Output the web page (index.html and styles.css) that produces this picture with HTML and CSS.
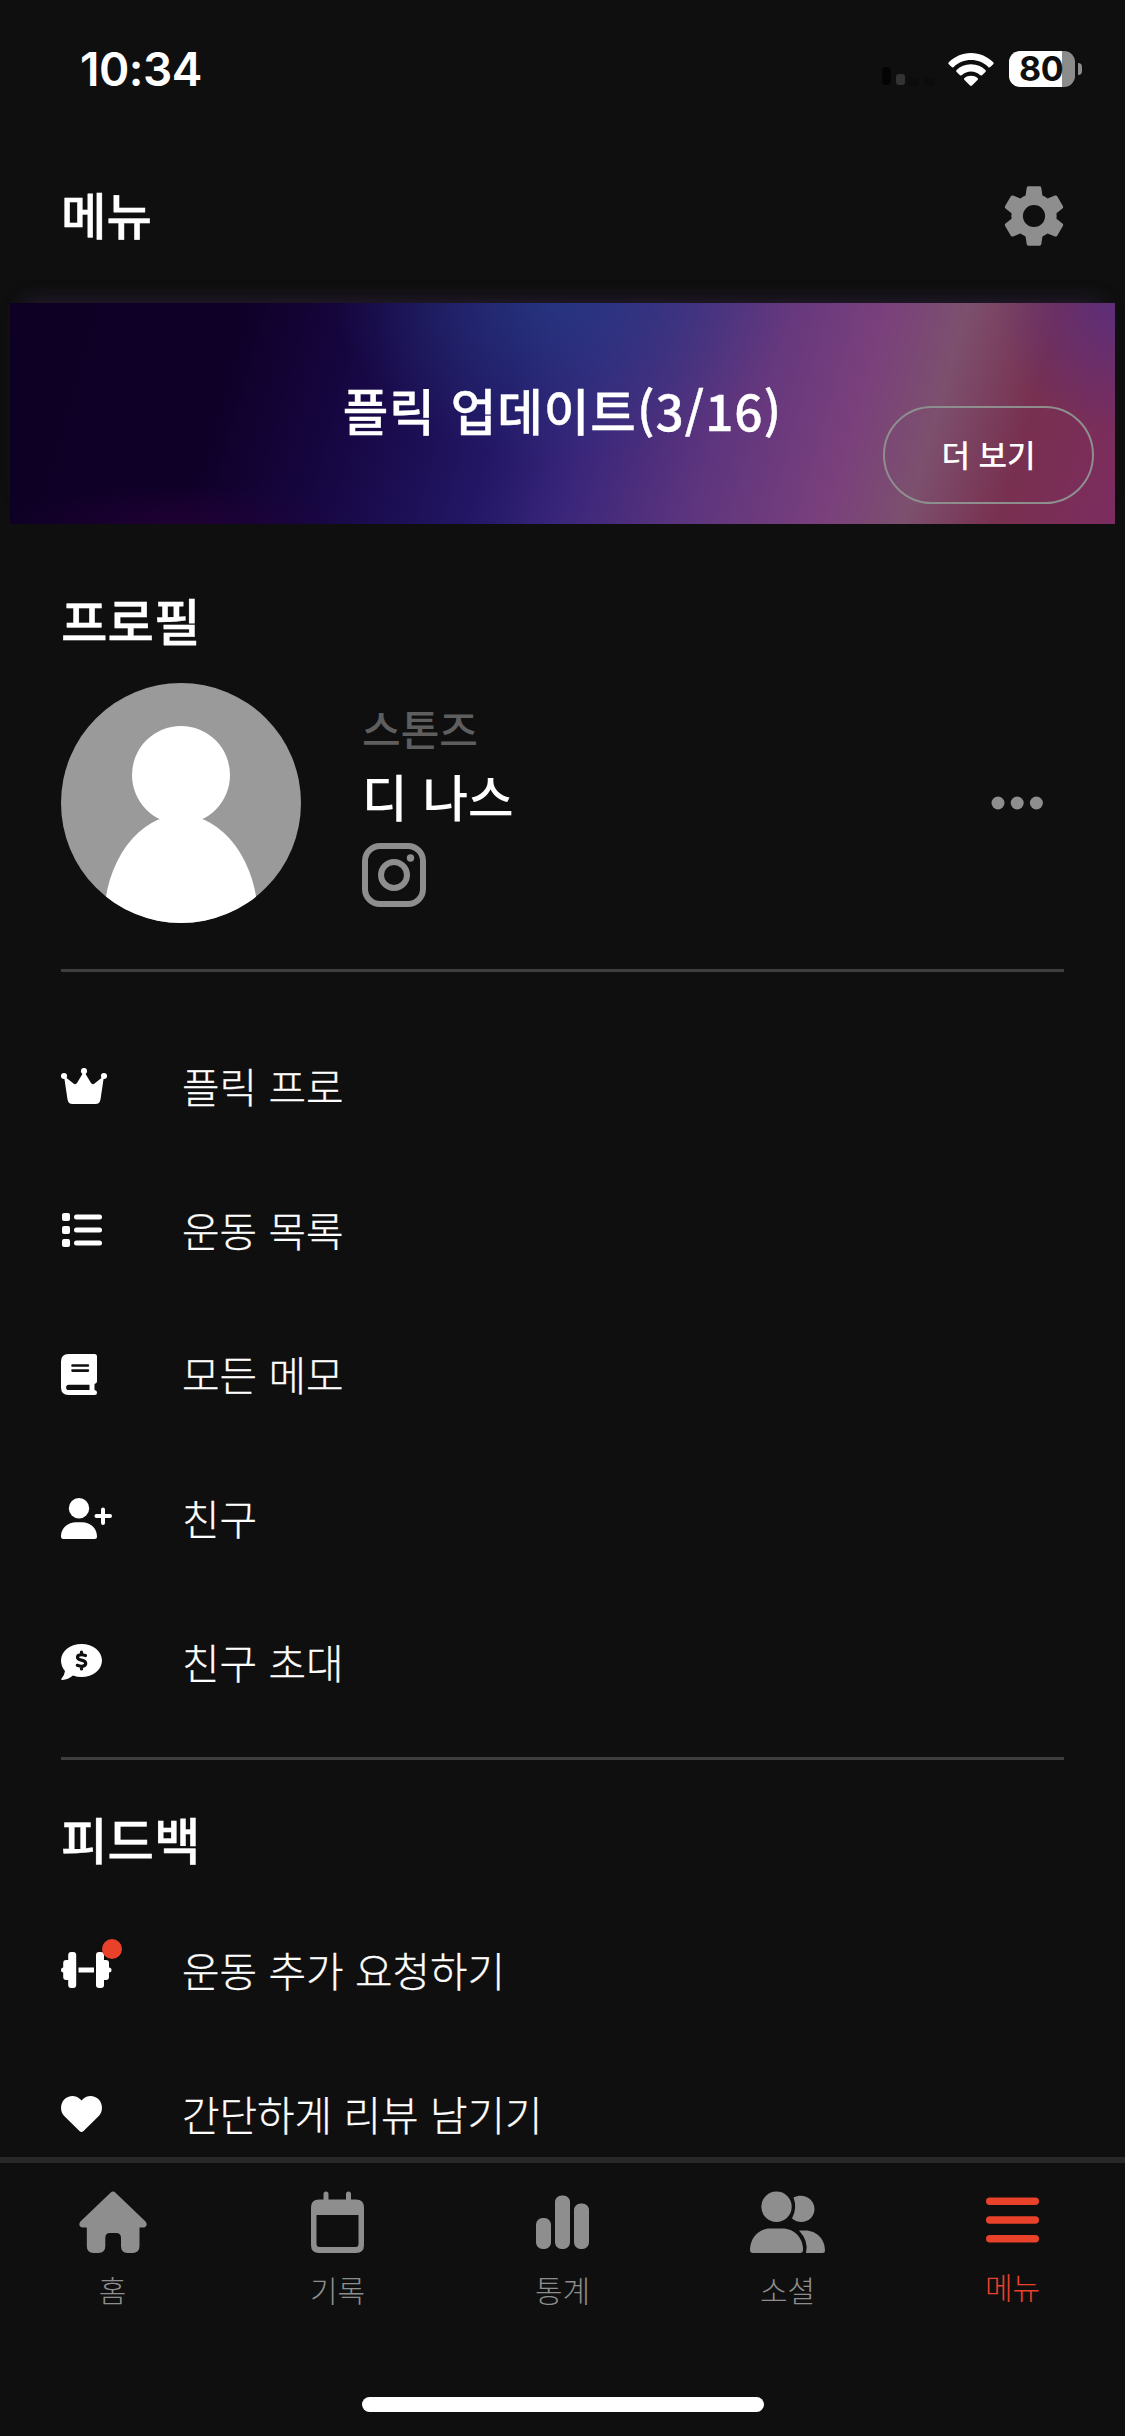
FILE: index.html
```html
<!DOCTYPE html>
<html lang="ko">
<head>
<meta charset="utf-8">
<title>메뉴</title>
<link rel="stylesheet" href="styles.css">
</head>
<body>
<div class="screen">
  <div class="status">
    <div class="clock">10:34</div>
    <div class="status-icons">
      <svg class="signal" width="54" height="36" viewBox="0 0 54 36"><rect x="0" y="16" width="9" height="18" rx="4" fill="#040404"/><rect x="14" y="23" width="9" height="11" rx="3" fill="#333"/><rect x="26" y="26" width="11" height="9" rx="4" fill="#0c0c0c"/><rect x="42" y="26" width="11" height="9" rx="4" fill="#0c0c0c"/></svg>
      <svg class="wifi" width="46" height="33" viewBox="0 0 46 33" fill="#fff"><path d="M23 0C32 0 39.500 3.700 45.200 9.300Q46.200 10.300 45.200 11.300L42.300 14Q41.300 14.900 40.300 13.900C35.600 9.400 29.700 7 23 7S10.400 9.400 5.700 13.900Q4.700 14.900 3.700 14L.8 11.300Q-.2 10.300.8 9.300C6.500 3.700 14 0 23 0Z"/><path d="M23 11.300C28.800 11.300 33.700 13.500 37.400 17Q38.400 18 37.400 19L34 22.200Q33 23 32 22.100C29.500 19.900 26.500 18.500 23 18.500S16.500 19.900 14 22.100Q13 23 12 22.200L8.600 19Q7.600 18 8.600 17C12.300 13.500 17.200 11.300 23 11.300Z"/><path d="M23 22.700C25.600 22.700 27.800 23.500 29.500 25Q30.500 26 29.500 27L24 32.500Q23 33.400 22 32.500L16.500 27Q15.500 26 16.500 25C18.200 23.500 20.400 22.700 23 22.700Z"/></svg>
      <div class="battery"><span>80</span></div>
      <div class="battery-tip"></div>
    </div>
  </div>

  <header class="header">
    <h1>메뉴</h1>
    <svg width="70" height="72" viewBox="0 0 24 24" fill="#8e8e8e"><path fill-rule="evenodd" d="M10.100 1.800h3.800q.5 0 .6.500l.4 2.700q.95.400 1.750 1l2.500-1q.5-.2.800.250l1.950 3.350q.25.500-.15.800l-2.050 1.650q.1.950 0 1.900l2.050 1.650q.4.300.15.800l-1.950 3.350q-.3.450-.8.250l-2.500-1q-.8.600-1.750 1l-.4 2.700q-.1.500-.6.500h-3.800q-.5 0-.6-.5l-.4-2.700q-.95-.4-1.750-1l-2.500 1q-.5.200-.8-.25L2.100 15.400q-.25-.5.150-.8l2.050-1.650q-.1-.95 0-1.900L2.250 9.400q-.4-.3-.15-.8l1.950-3.350q.3-.450.8-.25l2.500 1q.8-.6 1.750-1l.4-2.700q.1-.5.600-.5ZM12 8.200a3.800 3.800 0 1 0 0 7.600a3.800 3.800 0 0 0 0-7.600Z"/></svg>
  </header>

  <section class="banner">
    <div class="banner-title">플릭 업데이트(3/16)</div>
    <button class="more">더 보기</button>
  </section>

  <main class="content">
    <h2 class="profile-heading">프로필</h2>
    <div class="profile">
      <svg class="avatar" width="240" height="240" viewBox="0 0 240 240"><defs><clipPath id="round"><circle cx="120" cy="120" r="120"/></clipPath></defs><g clip-path="url(#round)"><path d="M0 0h240v240H0Z" fill="#9a9a9a"/><circle cx="120" cy="92" r="49" fill="#fff"/><ellipse cx="120" cy="237" rx="77" ry="105" fill="#fff"/></g></svg>
      <div class="identity">
        <div class="team">스톤즈</div>
        <div class="name">디 나스</div>
        <svg class="insta" width="64" height="64" viewBox="0 0 64 64" fill="none" stroke="#8e8e8e" stroke-width="6"><rect x="3" y="3" width="58" height="58" rx="15"/><circle cx="32" cy="32" r="13"/><circle cx="48.500" cy="15" r="3.700" fill="#8e8e8e" stroke="none"/></svg>
      </div>
      <svg class="dots" width="54" height="14" viewBox="0 0 54 14" fill="#8e8e8e"><circle cx="7" cy="7" r="6.500"/><circle cx="26.200" cy="7" r="6.500"/><circle cx="45.400" cy="7" r="6.500"/></svg>
    </div>
    <hr>
    <ul class="menu">
      <li><svg width="46" height="36" viewBox="0 0 46 36" fill="#fff"><circle cx="3" cy="8" r="3.100"/><circle cx="23" cy="3" r="3.100"/><circle cx="43" cy="8" r="3.100"/><path d="M3 8L12.500 15.500Q14.500 17 16 15L22 5H24L30 15Q31.500 17 33.500 15.500L43 8L39.500 31.500Q38.700 36 34.500 36H11.500Q7.300 36 6.500 31.500Z"/></svg><span>플릭 프로</span></li>
      <li><svg width="41" height="34" viewBox="0 0 41 34" fill="#fff"><rect x="1" y="0" width="8" height="8" rx="2"/><rect x="1" y="13" width="8" height="8" rx="2"/><rect x="1" y="26" width="8" height="8" rx="2"/><rect x="13" y="1.500" width="28" height="5" rx="2.500"/><rect x="13" y="14.500" width="28" height="5" rx="2.500"/><rect x="13" y="27.500" width="28" height="5" rx="2.500"/></svg><span>운동 목록</span></li>
      <li><svg width="36" height="41" viewBox="0 0 36 41" fill="#fff"><path fill-rule="evenodd" d="M7.500 0H33.500Q36 0 36 2.500V27.500Q36 29.300 33.500 30V36Q36 36.300 36 38.500Q36 41 33.500 41H7.500Q0 41 0 33.500V7.500Q0 0 7.500 0ZM11.500 10.200Q10.200 10.200 10.200 11.500T11.500 12.800H27Q28.200 12.800 28.200 11.500T27 10.200ZM11.500 15.300Q10.200 15.300 10.200 16.600T11.500 17.900H27Q28.200 17.900 28.200 16.600T27 15.300ZM7.700 30.800Q5.100 30.800 5.100 33.400T7.700 36H28.500V30.800Z"/></svg><span>모든 메모</span></li>
      <li><svg width="51" height="41" viewBox="0 0 51 41" fill="#fff"><circle cx="18" cy="10.300" r="10.200"/><path d="M15 24.200H21C29.500 24.200 36 30.500 36 38.500Q36 41 33.500 41H2.500Q0 41 0 38.500C0 30.500 6.500 24.200 15 24.200ZM40 11.500Q40 9.500 42 9.500T44 11.500V16H49Q51 16 51 18T49 20H44V25Q44 27 42 27T40 25V20H35.500Q33.500 20 33.500 18T35.500 16H40Z"/></svg><span>친구</span></li>
      <li><svg width="41" height="36" viewBox="0 0 41 36"><path fill="#fff" d="M20.500 0C32 0 41 7.300 41 16.500S32 33 20.500 33Q16 33 12 31.500Q7 35.600 1.500 36Q-.7 35.700.7 34.200Q3.600 31 4 27Q0 22.500 0 16.500C0 7.300 9 0 20.500 0Z"/><path fill="none" stroke="#0f0f0f" stroke-width="3.200" stroke-linecap="round" d="M20.500 8V10.500M20.500 22.500V25M24.500 11.500C21 10.400 16.500 10.200 16.500 13.500C16.500 17 24.700 15.300 24.700 19.300C24.700 22.800 20 22.800 16.300 21.300"/></svg><span>친구 초대</span></li>
    </ul>
    <hr>
    <h2 class="feedback-heading">피드백</h2>
    <ul class="menu feedback">
      <li><div class="badge-wrap"><svg width="51" height="36" viewBox="0 0 51 36" fill="#fff"><rect x="7.200" y="0" width="8" height="36" rx="3"/><rect x="2.200" y="8" width="9" height="20" rx="3"/><rect x="0" y="15.500" width="6" height="5" rx="2.500"/><rect x="17.500" y="15.500" width="15.500" height="5"/><rect x="35" y="0" width="8" height="36" rx="3"/><rect x="39" y="8" width="9" height="20" rx="3"/><rect x="44.500" y="15.500" width="6" height="5" rx="2.500"/></svg><i class="badge"></i></div><span>운동 추가 요청하기</span></li>
      <li><svg width="41" height="36" viewBox="0 0 41 36" fill="#fff"><path d="M18.700 35.200L3.200 20C-1 15.700-1 8.200 3.200 3.600C7.300-.8 14.700-1.200 19 3L20.500 4.600L22 3C26.300-1.200 33.700-.8 37.800 3.600C42 8.200 42 15.700 37.800 20L22.300 35.200Q20.500 36.800 18.700 35.200Z"/></svg><span>간단하게 리뷰 남기기</span></li>
    </ul>
  </main>

  <nav class="tabs">
    <div class="tab"><svg width="68" height="62" viewBox="0 0 68 62" fill="#8e8e8e"><path d="M31.500 1.700Q34-.8 36.500 1.700L66.300 30.300Q68.500 32.800 67.200 35Q66.300 36.500 64 36.500H60.500V55Q60.500 62 53.500 62H48.500Q42 62 42 55V47Q42 42 37 42H31Q26.300 42 26.300 47V55Q26.300 62 19.500 62H14.500Q7.800 62 7.800 55V36.500H4Q1.700 36.500 .8 35Q-.5 32.800 1.700 30.300Z"/></svg><span>홈</span></div>
    <div class="tab"><svg width="53" height="62" viewBox="0 0 53 62" fill="#8e8e8e"><path fill-rule="evenodd" d="M8 8.500H12.500V3Q12.500.5 15 .5T17.500 3V8.500H35V3Q35 .5 37.500.5T40 3V8.500H45Q53 8.500 53 16.500V54Q53 62 45 62H8Q0 62 0 54V16.500Q0 8.500 8 8.500ZM5.500 24V52.500Q5.500 56 8.500 56H44.500Q47.500 56 47.500 52.500V24Z"/></svg><span>기록</span></div>
    <div class="tab"><svg width="53" height="62" viewBox="0 0 53 62" fill="#8e8e8e"><rect y="27" width="15" height="31" rx="6.500"/><rect x="19" y="4.500" width="15" height="53.500" rx="6.500"/><rect x="38" y="12.500" width="15" height="45.500" rx="6.500"/></svg><span>통계</span></div>
    <div class="tab"><svg width="75" height="62" viewBox="0 0 75 62" fill="#8e8e8e"><circle cx="26.500" cy="15.800" r="15.200"/><path d="M20 37.500H32.500C44 37.500 53 46.500 53 59Q53 62 50 62H3Q0 62 0 59C0 46.500 9 37.500 20 37.500Z"/><path d="M43.500 6.500C54 1.500 64.500 8.500 64.500 18C64.500 29 51.500 35.500 42 27.500Q47.500 17 43.500 6.500Z"/><path d="M49 39.500H55C67 39.500 75 48.500 75 59.500Q75 62 72.500 62H56Q59 50 49 39.500Z"/></svg><span>소셜</span></div>
    <div class="tab active"><svg width="53" height="62" viewBox="0 0 53 62" fill="#ea412b"><rect y="6.500" width="53" height="7.500" rx="3.750"/><rect y="25.200" width="53" height="7.500" rx="3.750"/><rect y="44" width="53" height="7.500" rx="3.750"/></svg><span>메뉴</span></div>
  </nav>
  <div class="home-indicator"></div>
</div>
</body>
</html>
```

FILE: styles.css
```css
* { box-sizing: border-box; }
body { margin: 0; background: #0f0f0f; }
.screen {
  width: 1125px; height: 2436px; overflow: hidden;
  display: flex; flex-direction: column;
  background: #0f0f0f; color: #fff;
  font-family: "Noto Sans CJK KR", sans-serif;
}
h1, h2 { margin: 0; font-weight: 500; -webkit-text-stroke: 0.4px; }
.status {
  height: 138px; flex: none; padding: 0 43px 0 80px;
  display: flex; align-items: center; justify-content: space-between;
}
.clock { font: 600 46px/60px Inter, sans-serif; letter-spacing: -0.5px; }
.status-icons { display: flex; align-items: center; }
.wifi { margin-left: 12px; }
.battery {
  width: 66px; height: 36px; margin-left: 15px; border-radius: 11px;
  background: linear-gradient(90deg, #fff 53px, #8c8c8c 53px);
  color: #0f0f0f; font: 700 34px/36px Inter, sans-serif;
  padding-left: 10px; letter-spacing: -0.5px;
}
.battery-tip { width: 4px; height: 12px; margin-left: 3px; border-radius: 0 4px 4px 0; background: #8c8c8c; }
.header {
  height: 165px; flex: none; padding: 0 56px 9px 61px;
  display: flex; align-items: center; justify-content: space-between;
}
.header h1 { font-size: 49.500px; line-height: 60px; padding-bottom: 5px; }
.banner {
  height: 221px; flex: none; margin: 0 10px; padding: 0 21px 20px 0;
  display: grid; grid-template-columns: 1fr;
  background:
    radial-gradient(ellipse 120px 130px at 100% 0%, rgba(86, 46, 130, .8), transparent),
    radial-gradient(ellipse 170px 40px at 15% 100%, rgba(42, 0, 60, .6), transparent),
    radial-gradient(ellipse 230px 170px at 50% -5%, rgba(38, 62, 135, .75), transparent),
    linear-gradient(106deg, #0d0024 0%, #0f0028 20%, #170744 32%, #231766 45%, #38257a 52%, #5c347e 63%, #7a407c 75%, #7c506e 82%, #78304f 90%, #7c2c60 100%);
  box-shadow: 0 -14px 20px -14px rgba(80, 50, 110, .45);
}
.banner-title { grid-area: 1 / 1; align-self: start; margin-top: 72px; padding-left: 21px; text-align: center; font-size: 49.500px; line-height: 70px; font-weight: 500; letter-spacing: 1px; -webkit-text-stroke: 0.4px; }
.more {
  grid-area: 1 / 1; align-self: end; justify-self: end; z-index: 1;
  width: 211px; height: 98px; padding: 0 0 2px; border: 2.500px solid #8e8e8e; border-radius: 49px;
  background: transparent; color: #fff; font: 500 31px/40px "Noto Sans CJK KR", sans-serif;
}
.content { flex: none; height: 1633px; overflow: hidden; padding: 0 61px; }
.content h2 { font-size: 50.500px; line-height: 60px; }
.profile-heading { margin-top: 65px; }
.profile { display: flex; align-items: center; height: 240px; margin-top: 34px; }
.identity { margin-left: 61px; display: flex; flex-direction: column; }
.team { font-size: 42px; line-height: 56px; color: #5e5e5e; font-weight: 500; }
.name { font-size: 49.500px; line-height: 80px; font-weight: 500; word-spacing: 1px; }
.insta { display: block; margin-top: 7px; }
.dots { margin-left: auto; margin-right: 19px; }
hr { margin: 46px 0 0; height: 3px; border: 0; background: #3e3e3e; }
.menu { list-style: none; margin: 0; padding: 0; }
.menu li { height: 144px; display: grid; grid-template-columns: 121px 1fr; align-items: center; font-size: 40.800px; font-weight: 300; -webkit-text-stroke: 0.3px; }
.menu li > span { padding-bottom: 2px; }
.menu svg { display: block; }
hr + .menu { padding-top: 42px; }
.menu + hr { margin-top: 23px; }
.feedback-heading { margin-top: 48px; }
.feedback { padding-top: 30px; }
.badge-wrap { position: relative; width: 51px; }
.badge { position: absolute; left: 41px; top: -13px; width: 20px; height: 20px; border-radius: 50%; background: #ea412b; }
.tabs { flex: none; height: 240px; border-top: 6px solid #282828; display: flex; }
.tab { flex: 1; padding-top: 28px; display: flex; flex-direction: column; align-items: center; gap: 16px; font-size: 30px; line-height: 40px; font-weight: 300; color: #8e8e8e; }
.tab.active { color: #ea412b; gap: 13px; }
.home-indicator { flex: none; width: 402px; height: 15px; margin: 0 auto; border-radius: 8px; background: #fff; }
```
